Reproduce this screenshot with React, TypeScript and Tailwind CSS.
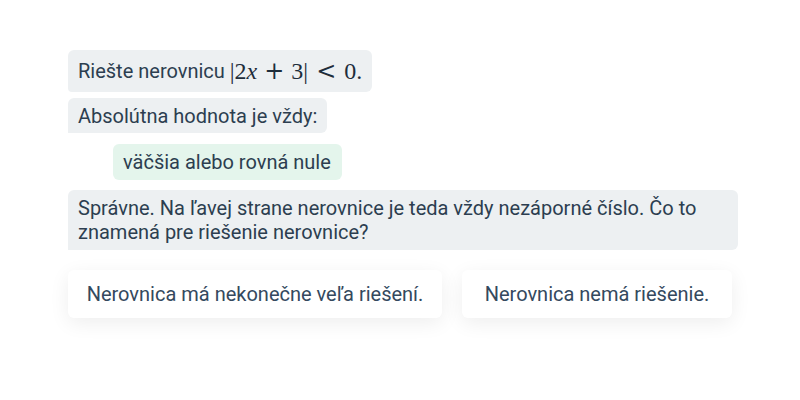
import React from "react";

const font = { fontFamily: "Roboto, 'Noto Sans', sans-serif" };

const Bubble: React.FC<{ children: React.ReactNode; className?: string }> = ({ children, className }) => (
  <div className={`text-[20px] leading-6 text-[#2c3e50] px-[10px] ${className ?? ""}`}>{children}</div>
);

// rendered like KaTeX: operator spacing around + and <
const Math: React.FC = () => (
  <span
    className="text-[24px] text-[#1e2d3b] whitespace-nowrap"
    style={{ fontFamily: "'Liberation Serif', 'DejaVu Serif', serif" }}
  >
    |2<i>x</i>
    <span className="mx-[7px]" style={{ fontFamily: "'DejaVu Serif', serif" }}>+</span>3|
    <span className="mx-[8px]" style={{ fontFamily: "'DejaVu Serif', serif" }}>&lt;</span>0.
  </span>
);

export default function App() {
  return (
    <div className="w-[800px] h-[400px] bg-white pt-[50px] pl-[68px]" style={font}>
      <div className="flex flex-col items-start w-[670px]">
        <Bubble className="bg-[#edf0f2] rounded-md rounded-bl-sm h-[42px] flex items-center whitespace-nowrap">
          <span>Riešte nerovnicu&nbsp;</span>
          <Math />
        </Bubble>
        <Bubble className="bg-[#edf0f2] rounded-md rounded-bl-none mt-[6px] h-[35px] flex items-center">
          Absolútna hodnota je vždy:
        </Bubble>
        <Bubble className="bg-[#e4f5ec] rounded-md ml-[45px] mt-[11px] h-[36px] w-[229px] flex items-center">
          väčšia alebo rovná nule
        </Bubble>
        <Bubble className="bg-[#edf0f2] rounded-md rounded-bl-none mt-[10px] py-[6px] w-full">
          Správne. Na ľavej strane nerovnice je teda vždy nezáporné číslo. Čo to znamená pre riešenie nerovnice?
        </Bubble>
        <div className="flex gap-5 mt-5">
          <button className="w-[374px] h-[48px] bg-white rounded-md text-[20px] text-[#34495e] shadow-[0_5px_20px_rgba(0,0,0,0.07)]">
            Nerovnica má nekonečne veľa riešení.
          </button>
          <button className="w-[270px] h-[48px] bg-white rounded-md text-[20px] text-[#34495e] shadow-[0_5px_20px_rgba(0,0,0,0.07)]">
            Nerovnica nemá riešenie.
          </button>
        </div>
      </div>
    </div>
  );
}
